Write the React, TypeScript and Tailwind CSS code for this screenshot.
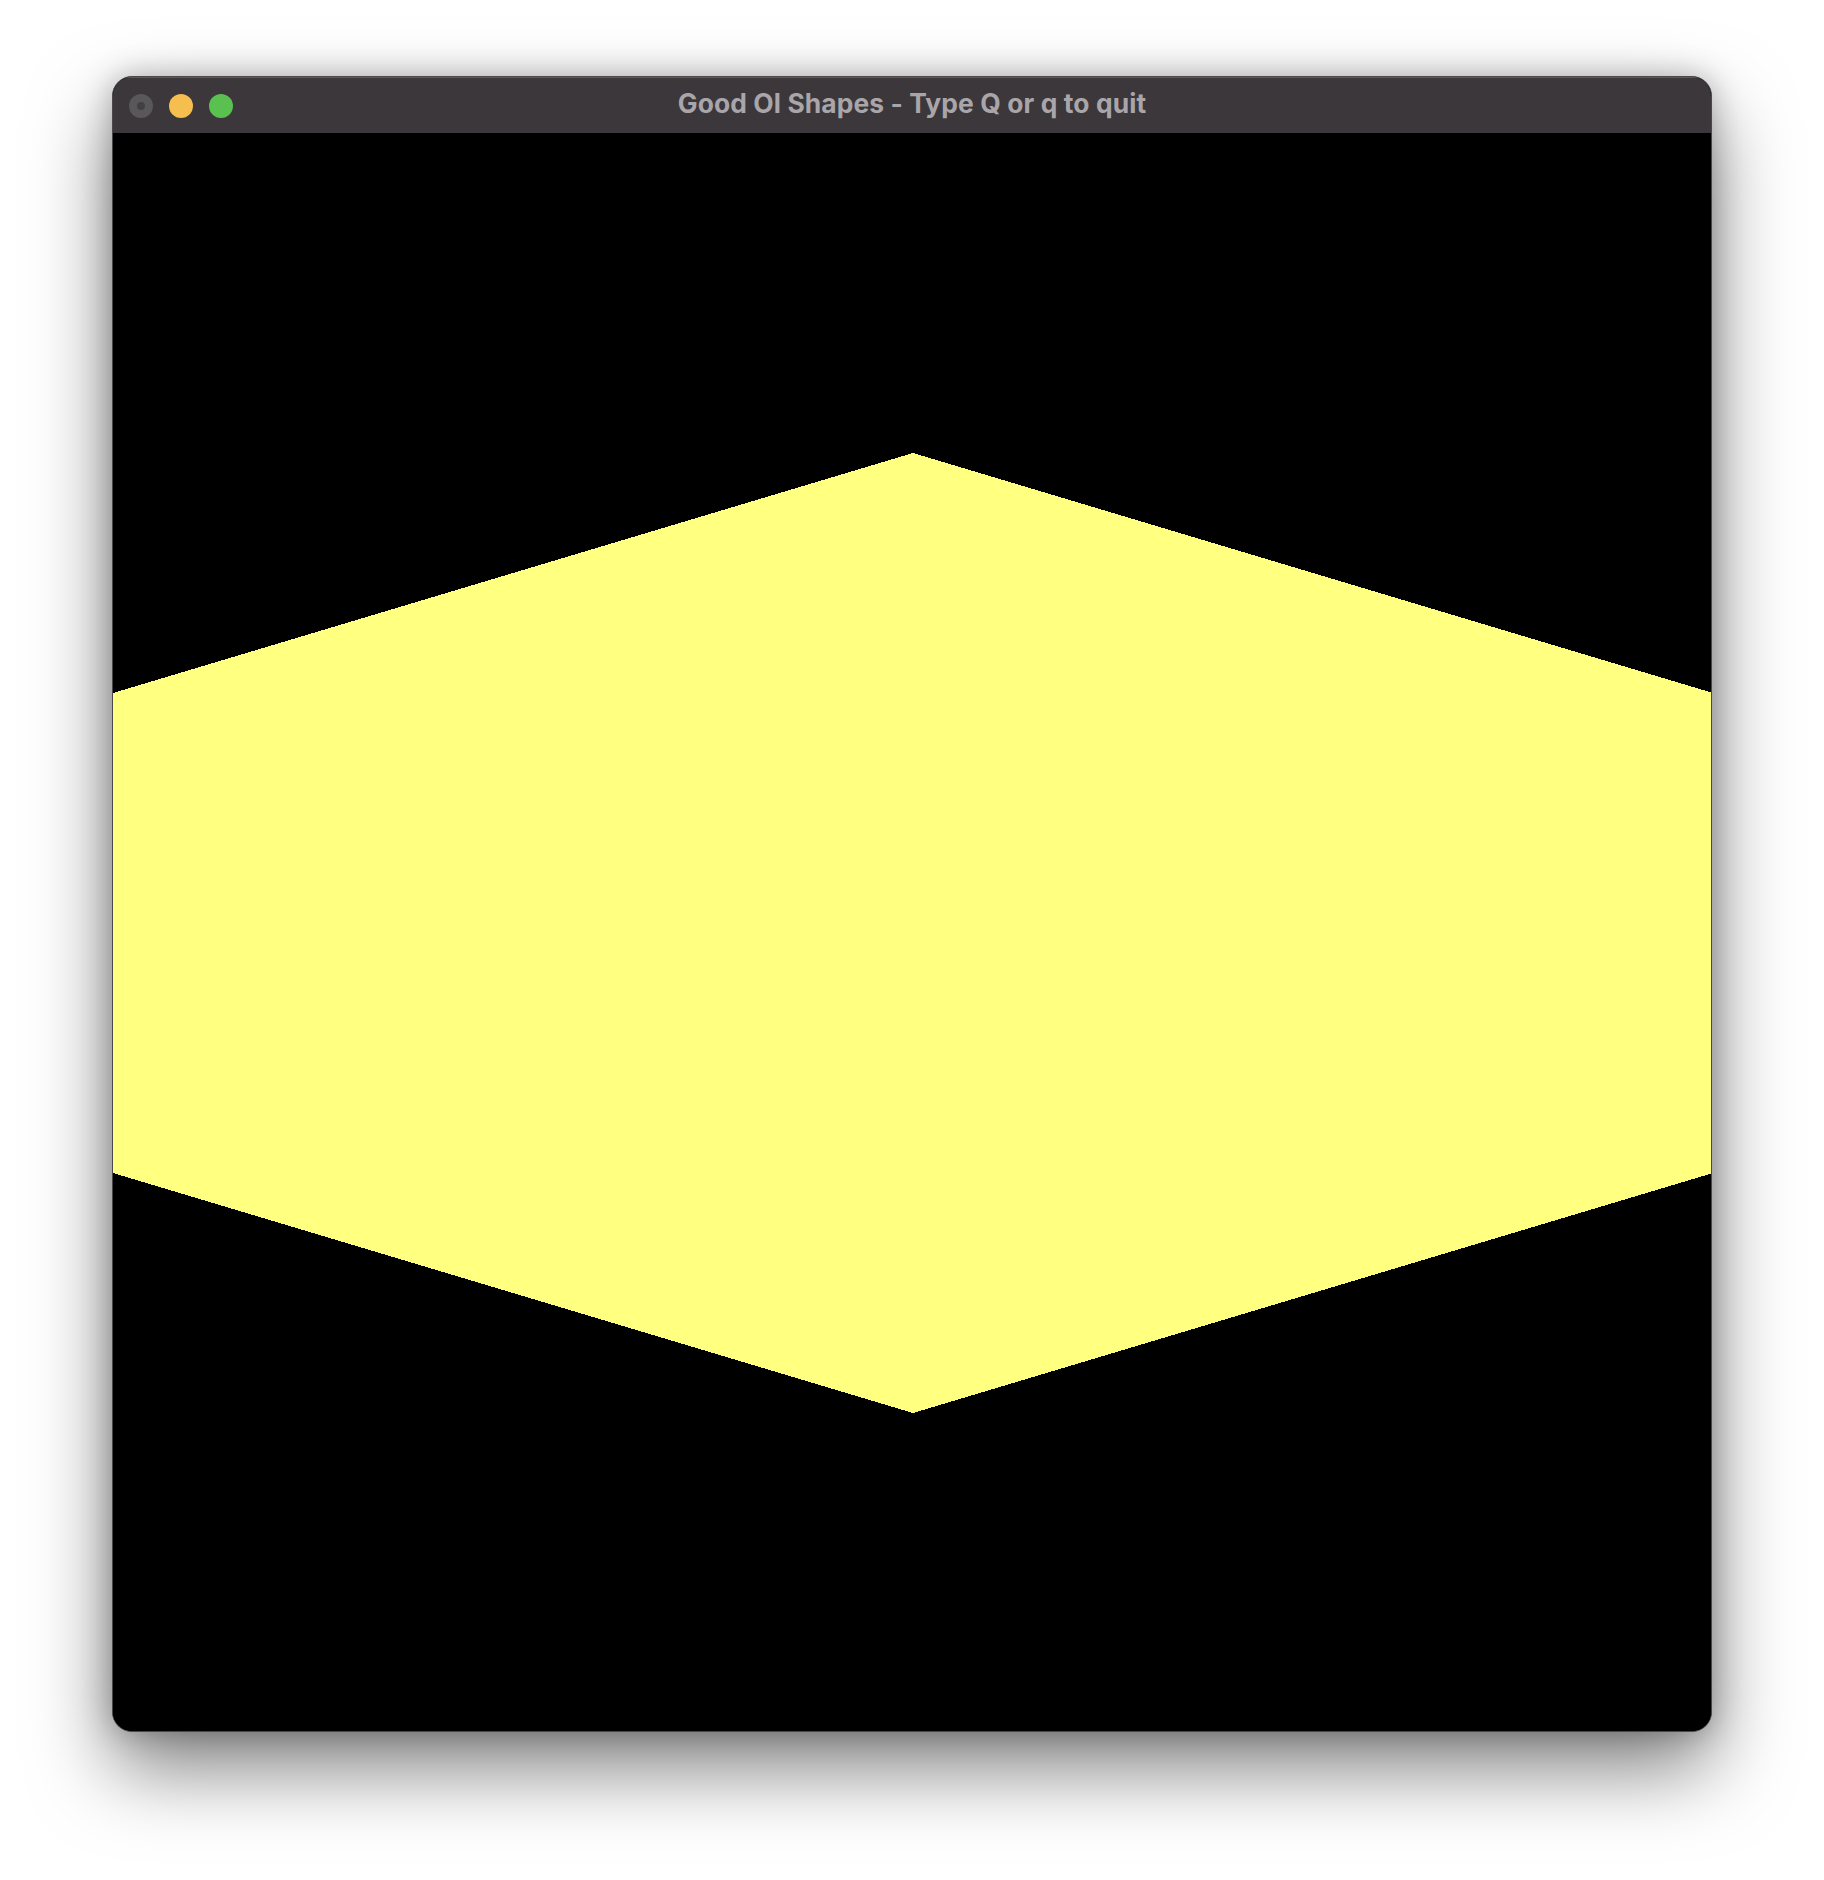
import React from "react";

export default function App() {
  return (
    <div className="w-[1824px] h-[1880px] bg-white pt-[76px] pl-[112px]">
      <div className="w-[1600px] h-[1656px] rounded-[20px] overflow-hidden border border-[#4a484a] bg-black flex flex-col shadow-[0_36px_80px_rgba(0,0,0,0.5),0_0_30px_rgba(0,0,0,0.25)]">
        <div className="h-[56px] shrink-0 bg-[#3b373b] border-t border-[#5c595c] relative flex items-center justify-center pb-[4px]">
          <div className="absolute left-[16px] top-[16px] flex gap-[16px]">
            <div className="w-[24px] h-[24px] rounded-full bg-[#5a575a] flex items-center justify-center">
              <div className="w-[8px] h-[8px] rounded-full bg-[#434043]" />
            </div>
            <div className="w-[24px] h-[24px] rounded-full bg-[#f6bd4f]" />
            <div className="w-[24px] h-[24px] rounded-full bg-[#5ac151]" />
          </div>
          <span
            className="text-[26.4px] font-bold text-[#a9a5a9] leading-none tracking-[0.1px]"
            style={{ fontFamily: "Inter, 'Noto Sans', sans-serif" }}
          >
            Good Ol Shapes - Type Q or q to quit
          </span>
        </div>
        <div className="flex-1 bg-black">
          <svg width="1600" height="1600" viewBox="0 0 1600 1600" shapeRendering="crispEdges" className="block">
            <polygon
              points="800,320 1600,560 1600,1040 800,1280 0,1040 0,560"
              fill="#ffff80"
            />
          </svg>
        </div>
      </div>
    </div>
  );
}
